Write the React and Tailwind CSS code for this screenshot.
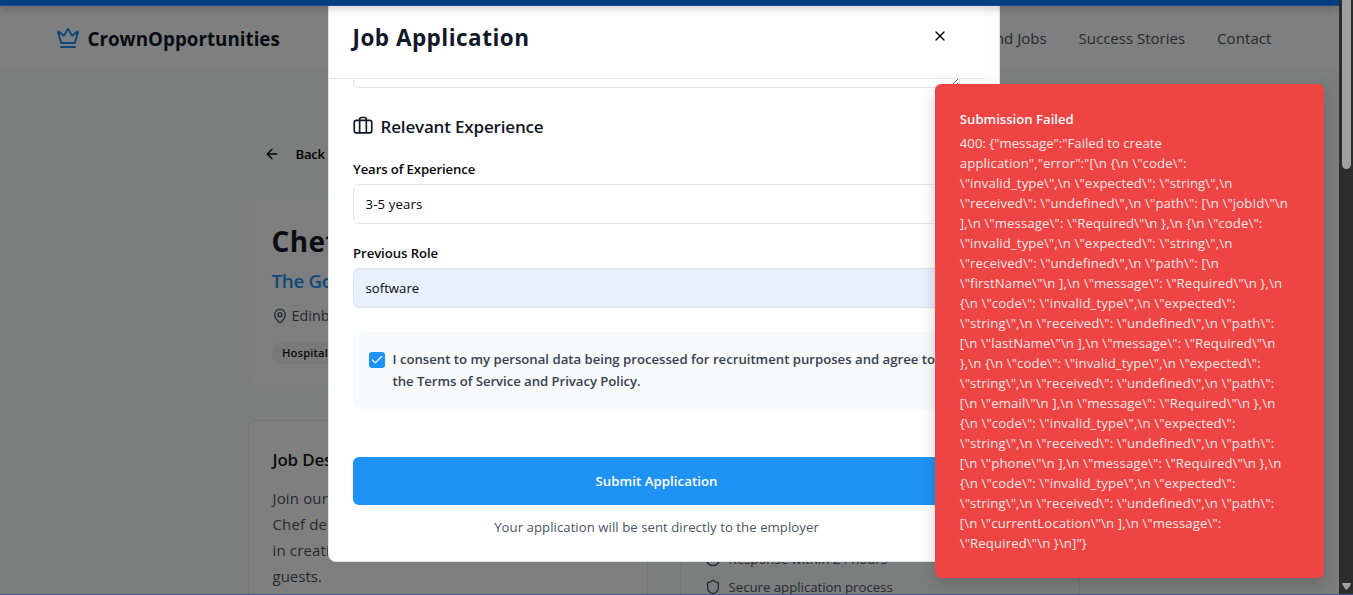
import { ArrowLeft, MapPin, Clock, Shield, Crown, X, Check, ChevronDown } from "lucide-react";

const toastLines = [
  'application","error":"[\\n {\\n \\"code\\":',
  '\\"invalid_type\\",\\n \\"expected\\": \\"string\\",\\n',
  '\\"received\\": \\"undefined\\",\\n \\"path\\": [\\n \\"jobId\\"\\n',
  '],\\n \\"message\\": \\"Required\\"\\n },\\n {\\n \\"code\\":',
  '\\"invalid_type\\",\\n \\"expected\\": \\"string\\",\\n',
  '\\"received\\": \\"undefined\\",\\n \\"path\\": [\\n',
  '\\"firstName\\"\\n ],\\n \\"message\\": \\"Required\\"\\n },\\n',
  '{\\n \\"code\\": \\"invalid_type\\",\\n \\"expected\\":',
  '\\"string\\",\\n \\"received\\": \\"undefined\\",\\n \\"path\\":',
  '[\\n \\"lastName\\"\\n ],\\n \\"message\\": \\"Required\\"\\n',
  '},\\n {\\n \\"code\\": \\"invalid_type\\",\\n \\"expected\\":',
  '\\"string\\",\\n \\"received\\": \\"undefined\\",\\n \\"path\\":',
  '[\\n \\"email\\"\\n ],\\n \\"message\\": \\"Required\\"\\n },\\n',
  '{\\n \\"code\\": \\"invalid_type\\",\\n \\"expected\\":',
  '\\"string\\",\\n \\"received\\": \\"undefined\\",\\n \\"path\\":',
  '[\\n \\"phone\\"\\n ],\\n \\"message\\": \\"Required\\"\\n },\\n',
  '{\\n \\"code\\": \\"invalid_type\\",\\n \\"expected\\":',
  '\\"string\\",\\n \\"received\\": \\"undefined\\",\\n \\"path\\":',
  '[\\n \\"currentLocation\\"\\n ],\\n \\"message\\":',
  '\\"Required\\"\\n }\\n]"}',
];

function Header() {
  return (
    <header className="flex h-[71px] shrink-0 items-center justify-between border-b border-[#f3f3f5] bg-white pt-[7px] pr-[67.5px] pl-14">
      <div className="flex items-center gap-[7.5px]">
        <Crown className="mb-px size-6 text-[#1f93f5]" />
        <span className="text-[18.8px] leading-7 font-bold text-[#111827]">CrownOpportunities</span>
      </div>
      <nav className="mb-0.5 flex gap-8 text-[15px] leading-6 text-[#4b5563]">
        <a>Find Jobs</a>
        <a>Success Stories</a>
        <a className="tracking-[0.08px]">Contact</a>
      </nav>
    </header>
  );
}

function JobPage() {
  return (
    <main className="flex flex-1 flex-col overflow-hidden bg-[#f9fbfa] pl-[248px] whitespace-nowrap">
      <div className="mt-[71px] flex h-6 shrink-0 items-center gap-[15.5px] pl-4 text-[13.2px] font-semibold tracking-[-0.3px] text-[#09090b]">
        <ArrowLeft className="size-4" />
        <span className="pt-px">Back</span>
      </div>
      <section className="mt-[31px] h-[191px] w-[831px] shrink-0 rounded-xl border border-[#f5f7f6] bg-[#fdfdfd] px-[22.5px] pt-[25px]">
        <h1 className="text-[28px] leading-9 font-bold tracking-[0.4px] text-[#111827]">Chef</h1>
        <p className="mt-2 text-[18.8px] leading-7 font-semibold tracking-[-0.3px] text-[#1f93f5]">The Gold</p>
        <p className="mt-[9px] flex items-center gap-1 text-[14.4px] leading-6 text-[#4b5563]">
          <MapPin className="size-4" />
          Edinburgh
        </p>
        <span className="mt-[14px] inline-flex h-[22px] items-center rounded-full bg-[#f3f3f4] px-[10.5px] pt-px text-[11.3px] font-semibold tracking-[0.09px] text-[#18181b]">
          Hospitality
        </span>
      </section>
      <div className="mt-8 flex shrink-0 gap-8">
        <section className="h-[300px] w-[400px] rounded-lg border border-[#e8e8ea] bg-white px-[23.5px] pt-[25px]">
          <h2 className="text-[16.9px] leading-7 font-semibold tracking-[-0.15px] text-[#111827]">Job Description</h2>
          <p className="mt-[11px] text-[15px] leading-[26px] tracking-[0.15px] text-[#4b5563]">
            Join our
            <br />
            Chef de
            <br />
            in creating
            <br />
            <span className="tracking-normal">guests.</span>
          </p>
        </section>
        <section className="h-[300px] w-[400px] rounded-lg border border-[#ebebed] px-6 pt-[128px] text-[13.2px] leading-5 text-[#4b5563]">
          <p className="flex items-center gap-[7.5px]">
            <Clock className="size-4" />
            Response within 24 hours
          </p>
          <p className="mt-2 flex items-center gap-[7.5px]">
            <Shield className="size-4" />
            Secure application process
          </p>
        </section>
      </div>
    </main>
  );
}

function ApplicationModal() {
  return (
    <div className="absolute top-[6px] left-[328px] flex h-[556px] w-[672px] flex-col overflow-hidden rounded-b-lg border border-t-0 border-[#e4e4e7] bg-white">
      <div className="flex h-[73px] shrink-0">
        <div className="flex w-[655px] justify-between border-b border-[#e5e7eb] pr-9 pl-[23.5px]">
          <h2 className="mt-4 text-[22.5px] leading-8 font-bold tracking-[0.48px] text-[#111827]">Job Application</h2>
          <X className="mt-[22px] size-4 text-[#09090b]" />
        </div>
        <div className="flex-1 bg-[#fcfcfc]" />
      </div>
      <div className="flex flex-col pr-[39px] pl-6">
        <div className="flex h-[9px] shrink-0 items-start justify-end rounded-b-md border border-t-0 border-[#e4e4e7]">
          <svg className="size-2" viewBox="0 0 8 8" fill="none" stroke="#555" strokeWidth="0.9">
            <path d="M1 6 7 0M5 6 7 4" />
          </svg>
        </div>
        <h3 className="mt-[25px] flex items-center gap-[7.5px] text-[17px] leading-7 font-semibold tracking-[-0.17px] text-[#111827]">
          <svg className="mb-[5px] size-5" viewBox="0 0 24 24" fill="none" stroke="currentColor" strokeWidth="2" strokeLinecap="round" strokeLinejoin="round">
            <rect x="1.5" y="6.500" width="21" height="15" rx="2.5" />
            <path d="M8 21V5a2 2 0 0 1 2-2h4a2 2 0 0 1 2 2v16" />
          </svg>
          Relevant Experience
        </h3>
        <label className="mt-[17px] text-[13.2px] leading-[22px] font-semibold tracking-[-0.14px] text-[#09090b]">Years of Experience</label>
        <div className="mt-1 flex h-10 items-center justify-between rounded-md border border-[#e4e4e7] px-[11.5px] pt-px text-[13.2px] tracking-[0.13px] text-[#09090b]">
          3-5 years
          <ChevronDown className="size-4 opacity-50" />
        </div>
        <label className="mt-[18px] text-[13.2px] leading-[22px] font-semibold tracking-[-0.08px] text-[#09090b]">Previous Role</label>
        <div className="mt-1 flex h-10 items-center rounded-md border border-[#dfe3ea] bg-[#e8f0fe] px-[11.5px] pt-px text-[13.2px] text-[#09090b]">
          software
        </div>
        <div className="mt-6 flex h-[77px] gap-2 rounded-lg bg-[#f9fafb] px-4 pt-4">
          <div className="mt-1 flex size-4 shrink-0 items-center justify-center rounded-[3px] bg-[#1f93f5]">
            <Check className="size-3.5 text-white" strokeWidth={2} />
          </div>
          <p className="-ml-px pl-[0.5px] text-[13.2px] leading-[22px] font-semibold tracking-[-0.015px] whitespace-nowrap text-[#374151]">
            I consent to my personal data being processed for recruitment purposes and agree to
            <br />
            <span className="tracking-[-0.06px]">the Terms of Service and Privacy Policy.</span>
          </p>
        </div>
        <button className="mt-12 h-12 rounded-md bg-[#1f93f5] pt-0.5 text-[13.2px] font-semibold tracking-[0.07px] text-white">Submit Application</button>
        <p className="mt-3 text-center text-[13.2px] leading-5 tracking-[0.04px] text-[#4b5563]">Your application will be sent directly to the employer</p>
      </div>
    </div>
  );
}

function ErrorToast() {
  return (
    <div className="absolute top-[84px] left-[935px] h-[494px] w-[389px] rounded-md bg-[#ef4444] pt-[25px] pl-[24.8px] text-[13.2px] leading-5 whitespace-pre text-[#fafafa] shadow-[0_6px_16px_rgba(0,0,0,0.18)]">
      <p className="font-semibold tracking-[-0.02px]">Submission Failed</p>
      <div className="mt-1 font-[450] opacity-90">
        <p>{'400: {"message":"Failed to create'}</p>
        {toastLines.map((line, i) => (
          <p key={i} className="tracking-[0.11px]">
            {line}
          </p>
        ))}
      </div>
    </div>
  );
}

export default function App() {
  return (
    <div className="relative flex h-[595px] w-[1353px] overflow-hidden font-['Open_Sans',sans-serif]">
      <div className="flex h-full w-[1339px] flex-col">
        <Header />
        <JobPage />
      </div>
      <div className="absolute inset-y-0 left-0 w-[1339px] bg-black/50" />
      <ApplicationModal />
      <ErrorToast />
      <div className="absolute top-0 left-0 h-[6px] w-[1339px] border-b border-[#1a4f8c] bg-[#003f80] shadow-[0_2px_8px_rgba(0,0,0,0.25)]" />
      <div className="relative flex w-[14px] flex-col items-center justify-between bg-[#2c2c2c] pb-[5px]">
        <div className="ml-px h-[169px] w-[9px] rounded-b-full bg-[#9f9f9f]" />
        <svg className="ml-px h-[7px] w-[9px]" viewBox="0 0 9 7" fill="#9f9f9f">
          <path d="M1 0h7q1 0 1 1L5.500 6.500h-2L0 1Q0 0 1 0Z" />
        </svg>
      </div>
      <div className="absolute bottom-0 left-0 h-px w-full bg-[#3f5a8c]" />
    </div>
  );
}
